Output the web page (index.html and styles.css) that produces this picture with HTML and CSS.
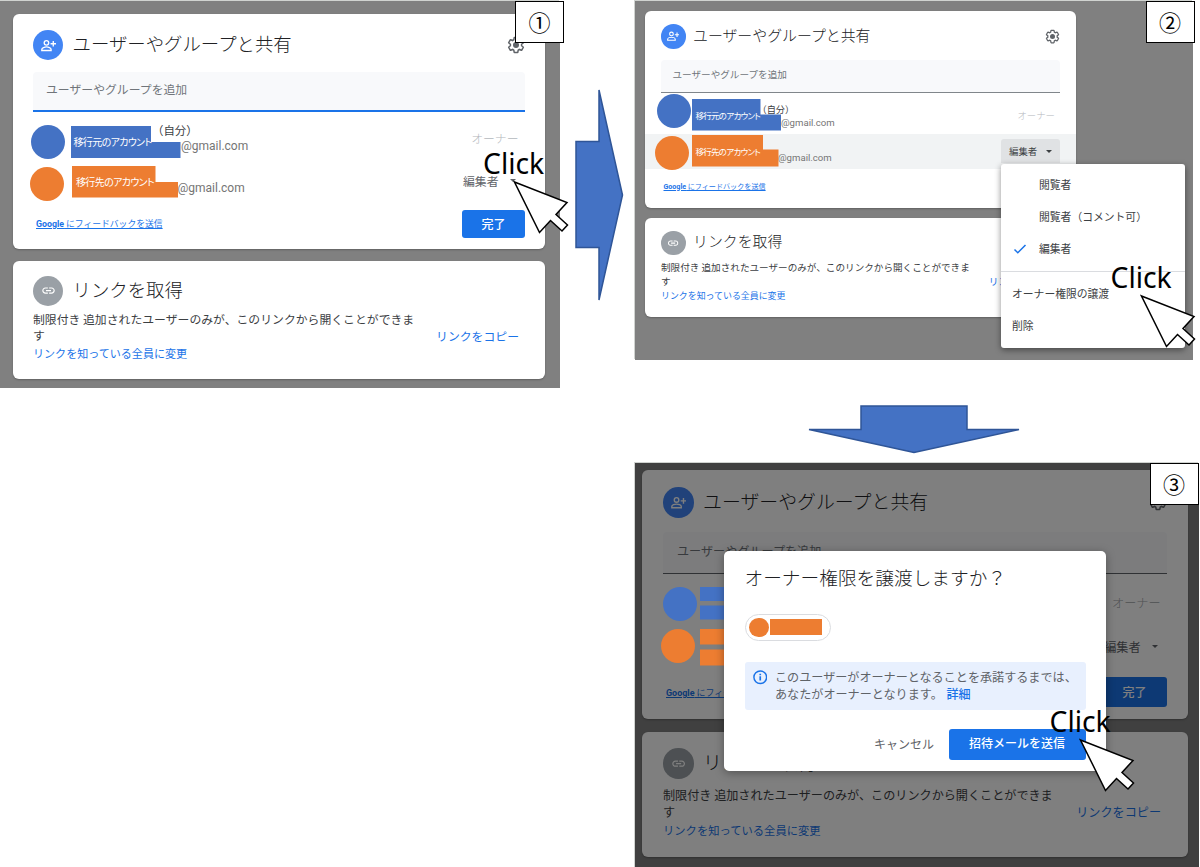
FILE: index.html
```html
<!DOCTYPE html>
<html lang="ja">
<head>
    <meta charset="UTF-8">
    <meta name="viewport" content="width=device-width, initial-scale=1.0">
    <title>オーナー権限の譲渡手順</title>
    <link rel="stylesheet" href="styles.css">
</head>
<body>
    <!-- 共通アイコン -->
    <svg class="defs" width="0" height="0">
        <symbol id="person-add" viewBox="0 0 22 17">
            <g fill="none" stroke="#fff" stroke-width="2">
                <circle cx="8" cy="4.6" r="3.3"/>
                <path d="M1.2 15.8v-1.6c0-2.3 4.4-3.6 6.8-3.6s6.8 1.3 6.8 3.6v1.6z"/>
                <path d="M18 2v8M14 6h8"/>
            </g>
        </symbol>
        <symbol id="link" viewBox="0 0 24 24">
            <path fill="#fff" d="M3.9 12c0-1.71 1.39-3.1 3.1-3.1h4V7H7c-2.76 0-5 2.24-5 5s2.24 5 5 5h4v-1.9H7c-1.71 0-3.1-1.39-3.1-3.1zM8 13h8v-2H8v2zm9-6h-4v1.9h4c1.71 0 3.1 1.39 3.1 3.1s-1.39 3.1-3.1 3.1h-4V17h4c2.76 0 5-2.24 5-5s-2.24-5-5-5z"/>
        </symbol>
        <symbol id="gear" viewBox="0 0 24 24">
            <path fill="none" stroke="#5f6368" stroke-width="2" d="M19.43 12.98c.04-.32.07-.64.07-.98 0-.34-.03-.66-.07-.98l2.11-1.65c.19-.15.24-.42.12-.64l-2-3.46c-.09-.16-.26-.25-.44-.25-.06 0-.12.01-.17.03l-2.49 1c-.52-.4-1.08-.73-1.69-.98l-.38-2.65C14.46 2.18 14.25 2 14 2h-4c-.25 0-.46.18-.49.42l-.38 2.65c-.61.25-1.17.59-1.69.98l-2.49-1c-.06-.02-.12-.03-.18-.03-.17 0-.34.09-.43.25l-2 3.46c-.13.22-.07.49.12.64l2.11 1.65c-.04.32-.07.65-.07.98 0 .33.03.66.07.98l-2.11 1.65c-.19.15-.24.42-.12.64l2 3.46c.09.16.26.25.44.25.06 0 .12-.01.17-.03l2.49-1c.52.4 1.08.73 1.69.98l.38 2.65c.03.24.24.42.49.42h4c.25 0 .46-.18.49-.42l.38-2.65c.61-.25 1.17-.59 1.69-.98l2.49 1c.06.02.12.03.18.03.17 0 .34-.09.43-.25l2-3.46c.12-.22.07-.49-.12-.64l-2.11-1.65z"/>
            <circle cx="12" cy="12" r="4" fill="#5f6368"/>
        </symbol>
        <symbol id="cursor" viewBox="0 0 56 54">
            <path fill="#fff" stroke="#000" stroke-width="1.5" d="M1.5 2 54 22.5 43 34.5 54.5 45 49 51 37.5 40.5 26.5 52.5z"/>
        </symbol>
    </svg>

    <div class="board">
        <!-- 手順1 -->
        <section class="shot shot1">
            <div class="card share">
                <div class="head">
                    <span class="icon blue"><svg><use href="#person-add"/></svg></span>
                    <h2>ユーザーやグループと共有</h2>
                    <svg class="gear"><use href="#gear"/></svg>
                </div>
                <div class="field">ユーザーやグループを追加</div>
                <div class="row">
                    <div class="who"><span class="me">（自分）</span><span class="mail">@gmail.com</span></div>
                    <span class="role owner">オーナー</span>
                    <i class="avatar src"></i>
                    <span class="mask src">移行元のアカウント</span>
                </div>
                <div class="row second">
                    <div class="who"><span class="me"></span><span class="mail">@gmail.com</span></div>
                    <span class="role editor">編集者<i class="caret"></i></span>
                    <i class="avatar dst"></i>
                    <span class="mask dst">移行先のアカウント</span>
                </div>
                <div class="foot">
                    <a class="feedback"><b>Google</b> にフィードバックを送信</a>
                    <span class="button">完了</span>
                </div>
            </div>
            <div class="card getlink">
                <div class="head">
                    <span class="icon gray"><svg><use href="#link"/></svg></span>
                    <h2>リンクを取得</h2>
                </div>
                <div class="link-body">
                    <div>
                        <p>制限付き 追加されたユーザーのみが、このリンクから開くことができま<br>す</p>
                        <a class="change">リンクを知っている全員に変更</a>
                    </div>
                    <a class="copy">リンクをコピー</a>
                </div>
            </div>
            <div class="badge">①</div>
            <div class="click">Click</div>
            <svg class="cursor"><use href="#cursor"/></svg>
        </section>

        <svg class="arrow-right" viewBox="0 0 50 214">
            <path fill="#4472c4" stroke="#2f5597" stroke-width="1.5" d="M1 54.5h23V3l23.5 105L24 213v-52.5H1z"/>
        </svg>

        <div class="right">
            <!-- 手順2 -->
            <section class="shot shot2">
                <div class="card share">
                    <div class="head">
                        <span class="icon blue"><svg><use href="#person-add"/></svg></span>
                        <h2>ユーザーやグループと共有</h2>
                        <svg class="gear"><use href="#gear"/></svg>
                    </div>
                    <div class="field">ユーザーやグループを追加</div>
                    <div class="row">
                        <div class="who"><span class="me">（自分）</span><span class="mail">@gmail.com</span></div>
                        <span class="role owner">オーナー</span>
                        <i class="avatar src"></i>
                        <span class="mask src">移行元のアカウント</span>
                    </div>
                    <div class="row second">
                        <div class="who"><span class="me"></span><span class="mail">@gmail.com</span></div>
                        <span class="role editor">編集者<i class="caret"></i></span>
                        <i class="avatar dst"></i>
                        <span class="mask dst">移行先のアカウント</span>
                    </div>
                    <div class="foot">
                        <a class="feedback"><b>Google</b> にフィードバックを送信</a>
                    </div>
                </div>
                <div class="card getlink">
                    <div class="head">
                        <span class="icon gray"><svg><use href="#link"/></svg></span>
                        <h2>リンクを取得</h2>
                    </div>
                    <div class="link-body">
                        <div>
                            <p>制限付き 追加されたユーザーのみが、このリンクから開くことができま<br>す</p>
                            <a class="change">リンクを知っている全員に変更</a>
                        </div>
                        <a class="copy">リンクをコピー</a>
                    </div>
                </div>
                <ul class="menu">
                    <li class="indent">閲覧者</li>
                    <li class="indent">閲覧者（コメント可）</li>
                    <li class="checked"><svg viewBox="0 0 14 12"><path fill="none" stroke="#1a73e8" stroke-width="1.5" d="M1.5 6.5 4.8 9.8 12.5 2"/></svg>編集者</li>
                    <li class="line"></li>
                    <li>オーナー権限の譲渡</li>
                    <li>削除</li>
                </ul>
                <div class="badge">②</div>
                <div class="click">Click</div>
                <svg class="cursor"><use href="#cursor"/></svg>
            </section>

            <svg class="arrow-down" viewBox="0 0 214 50">
                <path fill="#4472c4" stroke="#2f5597" stroke-width="1.5" d="M54 2h106v23.5h52L107 48.5 2 25.5h52z"/>
            </svg>

            <!-- 手順3 -->
            <section class="shot shot3">
                <div class="card share">
                    <div class="head">
                        <span class="icon blue"><svg><use href="#person-add"/></svg></span>
                        <h2>ユーザーやグループと共有</h2>
                        <svg class="gear"><use href="#gear"/></svg>
                    </div>
                    <div class="field">ユーザーやグループを追加</div>
                    <div class="row">
                        <span class="role owner">オーナー</span>
                    </div>
                    <div class="row second">
                        <span class="role editor">編集者<i class="caret"></i></span>
                    </div>
                    <div class="foot">
                        <a class="feedback"><b>Google</b> にフィードバックを送信</a>
                        <span class="button">完了</span>
                    </div>
                </div>
                <div class="card getlink">
                    <div class="head">
                        <span class="icon gray"><svg><use href="#link"/></svg></span>
                        <h2>リンクを取得</h2>
                    </div>
                    <div class="link-body">
                        <div>
                            <p>制限付き 追加されたユーザーのみが、このリンクから開くことができま<br>す</p>
                            <a class="change">リンクを知っている全員に変更</a>
                        </div>
                        <a class="copy">リンクをコピー</a>
                    </div>
                </div>
                <div class="overlay"></div>
                <i class="avatar src"></i>
                <i class="avatar dst"></i>
                <div class="bars src"></div>
                <div class="bars dst"></div>
                <div class="dialog">
                    <h3>オーナー権限を譲渡しますか？</h3>
                    <div class="chip"><i class="dot"></i><i class="name"></i></div>
                    <div class="info">
                        <svg viewBox="0 0 24 24"><circle cx="12" cy="12" r="10.5" fill="none" stroke="#1a73e8" stroke-width="2.4"/><path fill="#1a73e8" d="M10.6 10.5h2.8v7h-2.8zM10.6 6h2.8v2.8h-2.8z"/></svg>
                        <p>このユーザーがオーナーとなることを承諾するまでは、<br>あなたがオーナーとなります。 <a>詳細</a></p>
                    </div>
                    <div class="actions">
                        <span class="cancel">キャンセル</span>
                        <span class="send">招待メールを送信</span>
                    </div>
                </div>
                <div class="badge">③</div>
                <div class="click">Click</div>
                <svg class="cursor"><use href="#cursor"/></svg>
            </section>
        </div>
    </div>
</body>
</html>
```
FILE: styles.css
```css
* {
    box-sizing: border-box;
}
body {
    margin: 0;
    height: 867px;
    overflow: hidden;
    background-color: #fff;
    color: #3c4043;
    font-family: "Noto Sans CJK JP", sans-serif;
}
h2, h3, p, ul {
    margin: 0;
    padding: 0;
    font-weight: 300;
}
.defs {
    position: absolute;
}
.board {
    display: flex;
    align-items: flex-start;
    padding-top: 1px;
}
.right {
    flex: none;
    width: 565px;
}
.arrow-right {
    flex: none;
    width: 50px;
    height: 214px;
    margin: 86px 10px 0 15px;
}
.arrow-down {
    display: block;
    width: 214px;
    height: 50px;
    margin: 44px 0 9px 172px;
}

/* 画面ごとの寸法 */
.shot {
    position: relative;
    flex: none;
    background-color: #808080;
    box-shadow: -1px -1px 0 #d0d3d0;
}
.shot1 {
    --pad: 20px;
    --icon: 30px;
    --title: 18.4px;
    --body: 11.85px;
    --change: 11.05px;
    --small: 8.8px;
    --row: 42px;
    --line: 16.5px;
    --mail: 12px;
    width: 560px;
    height: 387px;
    padding: 13px 15px 0 13px;
}
.shot2 {
    --pad: 16px;
    --icon: 24.5px;
    --title: 14.9px;
    --body: 9.6px;
    --change: 8.93px;
    --small: 7.1px;
    --row: 35px;
    --line: 14px;
    --mail: 9.6px;
    width: 558px;
    height: 359px;
    padding: 10px 117px 0 10px;
}
.shot3 {
    --pad: 21px;
    --icon: 30.5px;
    --title: 18.9px;
    --body: 12.12px;
    --change: 11.3px;
    --small: 8.95px;
    --row: 44px;
    --line: 17px;
    width: 563.5px;
    height: 405px;
    padding: 7px 10.5px 0 7px;
}

/* カード */
.card {
    background-color: #fff;
    border-radius: 6px;
    box-shadow: 0 1px 2px rgba(0, 0, 0, 0.25);
}
.shot1 .share { height: 234.5px; padding-top: 16px; }
.shot1 .getlink { height: 117.5px; margin-top: 12.5px; padding-top: 14.5px; }
.shot2 .share { height: 197px; padding-top: 13px; }
.shot2 .getlink { height: 99.5px; margin-top: 9.5px; padding-top: 13px; }
.shot3 .share { height: 249px; padding-top: 17px; }
.shot3 .getlink { height: 125px; margin-top: 12.5px; padding-top: 16.5px; }
.head {
    display: flex;
    align-items: center;
    height: var(--icon);
    padding: 0 var(--pad);
}
.head h2 {
    flex: 1;
    margin-left: 9.5px;
    padding-bottom: 4px;
    color: #202124;
    font-size: var(--title);
    line-height: calc(var(--icon) - 2px);
    white-space: nowrap;
}
.shot2 .head h2 { margin-left: 7.5px; padding-bottom: 3px; }
.shot3 .head h2 { padding-bottom: 3px; }
.icon {
    display: flex;
    align-items: center;
    justify-content: center;
    width: var(--icon);
    height: var(--icon);
    border-radius: 50%;
}
.icon.blue { background-color: #4285f4; }
.icon.gray { background-color: #9aa0a6; }
.icon svg {
    width: 50%;
    height: 50%;
}
.gear {
    width: 18px;
    height: 18px;
}
.shot2 .gear { width: 15px; height: 15px; }
.field {
    margin: 12px var(--pad) 0;
    height: 40px;
    padding-left: 13px;
    background-color: #f8f9fb;
    border-bottom: 2px solid #1a73e8;
    border-radius: 4px 4px 0 0;
    color: #70757a;
    font-size: var(--body);
    line-height: 34px;
}
.shot2 .field {
    margin-top: 11.5px;
    height: 32.5px;
    padding-left: 11.5px;
    border-bottom: 1px solid #80868b;
    line-height: 28px;
}
.shot3 .field {
    margin-top: 14px;
    height: 42px;
    padding-left: 14px;
    border-bottom: 1px solid #5f6368;
    line-height: 37px;
}
.row {
    position: relative;
    display: flex;
    align-items: center;
    justify-content: flex-end;
    height: var(--row);
    padding-right: var(--pad);
}
.field + .row { margin-top: 5px; }
.shot2 .field + .row { margin-top: 6px; }
.shot3 .field + .row { margin-top: 7px; }
.shot2 .second { background-color: #f1f3f4; }
.who {
    flex: 1;
    display: flex;
    flex-direction: column;
    font-size: calc(var(--body) - 0.4px);
}
.who span {
    height: var(--line);
    line-height: var(--line);
}
.mail {
    color: #757575;
    font-family: Roboto, sans-serif;
    font-size: var(--mail);
}
.shot1 .me { margin-left: 139px; }
.shot1 .mail { margin-left: 168px; }
.shot1 .second .mail { margin-left: 164.5px; }
.shot2 .me { margin-left: 112.5px; }
.shot2 .mail { margin-left: 136px; }
.shot2 .second .mail { margin-left: 133px; }
.role {
    display: flex;
    align-items: center;
    font-size: var(--body);
}
.owner {
    color: #b4b8bd;
    font-weight: 300;
    margin-right: 6.5px;
}
.shot1 .owner { padding-bottom: 1px; }
.shot2 .owner { font-size: 9.4px; margin-right: 5px; padding-bottom: 2px; }
.shot3 .owner { color: #a0a4a8; }
.editor { color: #5f6368; margin-right: 9.5px; }
.shot2 .editor {
    height: 24px;
    width: 59px;
    margin-right: 0;
    padding-left: 8px;
    background-color: #e0e2e4;
    border-radius: 3px 3px 0 0;
    color: #3c4043;
    font-size: 9.4px;
}
.caret {
    margin-left: 11px;
    border: 3.5px solid transparent;
    border-top-color: #5f6368;
    border-bottom: 0;
}
.shot2 .caret { margin-left: 9px; border-width: 3px 3px 0; border-top-color: #3c4043; }
.foot {
    display: flex;
    align-items: center;
    justify-content: space-between;
    height: 28px;
    margin-top: 8.5px;
    padding: 0 var(--pad) 0 calc(var(--pad) + 3px);
}
.shot2 .foot { height: 22px; margin-top: 6px; padding-left: 18.5px; }
.shot3 .foot { height: 30px; margin-top: 8.5px; }
.feedback {
    color: #1a73e8;
    font-size: var(--small);
    text-decoration: underline;
    white-space: nowrap;
}
.feedback b {
    font-family: Roboto, sans-serif;
    font-weight: 700;
}
.button {
    width: 63px;
    height: 28px;
    background-color: #1a73e8;
    border-radius: 3px;
    color: #fff;
    font-size: 12px;
    font-weight: 500;
    line-height: 27px;
    text-align: center;
}
.shot3 .button { width: 65px; height: 30px; line-height: 29px; }

.link-body {
    display: flex;
    align-items: center;
    justify-content: space-between;
    padding: 5.5px calc(var(--pad) + 6px) 0 var(--pad);
}
.shot2 .link-body { padding-top: 5px; padding-right: 20px; }
.shot3 .link-body { padding-top: 7px; }
.link-body p {
    font-size: var(--body);
    font-weight: 400;
    line-height: 16.3px;
    white-space: nowrap;
}
.link-body a {
    display: block;
    color: #1a73e8;
    line-height: 18px;
    white-space: nowrap;
}
.change { font-size: var(--change); }
.copy { font-size: var(--body); }
.shot2 .link-body p { line-height: 14px; }
.shot2 .link-body a { line-height: 15px; }
.shot3 .link-body p { line-height: 17px; }
.shot3 .change { padding-top: 1px; }

/* アカウントを隠す図形 */
.avatar {
    position: absolute;
    width: 34px;
    height: 34px;
    border-radius: 50%;
}
.src { background-color: #4472c4; }
.dst { background-color: #ed7d31; }
.mask {
    position: absolute;
    color: #fff;
    font-feature-settings: "palt";
    white-space: nowrap;
}
.shot1 .avatar.src { left: 18px; top: 7.5px; }
.shot1 .avatar.dst { left: 16.5px; top: 7.5px; }
.shot1 .mask {
    font-size: 10px;
    letter-spacing: -0.65px;
    line-height: 32px;
}
.shot1 .mask.src {
    left: 58px;
    top: 9px;
    width: 109.5px;
    height: 32px;
    padding-left: 2.5px;
    clip-path: polygon(0 0, 80px 0, 80px 16px, 100% 16px, 100% 100%, 0 100%);
}
.shot1 .mask.dst {
    left: 59px;
    top: 6.5px;
    width: 106px;
    height: 32px;
    padding-left: 4px;
    clip-path: polygon(0 0, 83.5px 0, 83.5px 16.5px, 100% 16.5px, 100% 100%, 0 100%);
}
.shot2 .avatar.src { left: 11.5px; top: -5px; }
.shot2 .avatar.dst { left: 10px; top: 2px; }
.shot2 .mask {
    left: 46.5px;
    height: 32px;
    padding-left: 4px;
    font-size: 8.5px;
    letter-spacing: -0.75px;
    line-height: 32px;
}
.shot2 .mask.src {
    top: 0;
    width: 89.5px;
    clip-path: polygon(0 0, 69px 0, 69px 16px, 100% 16px, 100% 100%, 0 100%);
}
.shot2 .mask.dst {
    top: 1px;
    width: 87px;
    clip-path: polygon(0 0, 71.5px 0, 71.5px 15px, 100% 15px, 100% 100%, 0 100%);
}
.shot3 .avatar.src { left: 28px; top: 124px; }
.shot3 .avatar.dst { left: 26px; top: 166px; }
.bars {
    position: absolute;
    left: 65px;
    width: 60px;
}
.bars.src {
    top: 124px;
    height: 32.5px;
    clip-path: polygon(0 0, 100% 0, 100% 14px, 0 14px, 0 18.5px, 100% 18.5px, 100% 100%, 0 100%);
}
.bars.dst {
    top: 165.5px;
    height: 37px;
    clip-path: polygon(0 0, 100% 0, 100% 16px, 0 16px, 0 21px, 100% 21px, 100% 100%, 0 100%);
}

/* メニュー */
.menu {
    position: absolute;
    left: 366px;
    top: 162.5px;
    width: 184px;
    height: 184.5px;
    padding-top: 4px;
    background-color: #fff;
    border-radius: 3px;
    box-shadow: 0 2px 6px rgba(0, 0, 0, 0.45);
    list-style: none;
    font-size: 10.8px;
    font-weight: 400;
    color: #3c4043;
}
.menu li {
    display: flex;
    align-items: center;
    height: 32.4px;
    padding-left: 11px;
}
.menu .indent { padding-left: 38px; }
.menu .checked svg {
    width: 14px;
    height: 12px;
    margin: 2px 12px 0 1px;
}
.menu .line {
    height: 1px;
    margin: 6px 0 5px;
    background-color: #dadce0;
}

/* ダイアログ */
.overlay {
    position: absolute;
    inset: 0;
    background-color: rgba(0, 0, 0, 0.5);
}
.dialog {
    position: absolute;
    left: 89px;
    top: 88px;
    width: 382px;
    height: 220px;
    padding: 11px 20.5px 0;
    background-color: #fff;
    border-radius: 5px;
    box-shadow: 0 2px 10px rgba(0, 0, 0, 0.35);
}
.dialog h3 {
    color: #202124;
    font-size: 18.7px;
    line-height: 29px;
    white-space: nowrap;
}
.chip {
    display: flex;
    align-items: center;
    width: 86px;
    height: 27px;
    margin-top: 23px;
    padding-left: 3.5px;
    border: 1px solid #dadce0;
    border-radius: 14px;
}
.dot {
    width: 19.5px;
    height: 19.5px;
    border-radius: 50%;
    background-color: #ed7d31;
}
.name {
    width: 52px;
    height: 16px;
    margin: -1px 0 0 1.5px;
    background-color: #ed7d31;
}
.info {
    display: flex;
    height: 48px;
    margin-top: 21px;
    padding: 6px 0 0 8px;
    background-color: #e8f0fe;
    border-radius: 3px;
    font-size: 12.1px;
    line-height: 17px;
    white-space: nowrap;
}
.info svg {
    flex: none;
    width: 14.5px;
    height: 14.5px;
    margin: 2px 8px 0 0;
}
.info p { font-weight: 400; color: #5f6368; }
.info a { color: #1a73e8; font-weight: 500; margin-left: 1px; }
.actions {
    display: flex;
    align-items: center;
    justify-content: flex-end;
    margin-top: 19px;
    font-size: 12px;
}
.cancel { color: #5f6368; margin-right: 14.5px; padding-bottom: 2px; }
.send {
    width: 137px;
    height: 30.5px;
    background-color: #1a73e8;
    border-radius: 3px;
    color: #fff;
    font-weight: 500;
    line-height: 28px;
    text-align: center;
}

/* 番号とクリック位置 */
.badge {
    position: absolute;
    top: 0;
    width: 49px;
    height: 42px;
    background-color: #fff;
    border: 1.5px solid #000;
    color: #000;
    font-size: 22px;
    line-height: 38px;
    text-align: center;
}
.shot1 .badge { left: 515px; }
.shot2 .badge { left: 510.5px; }
.shot3 .badge { left: 514.5px; }
.click {
    position: absolute;
    color: #000;
    font-family: "Noto Sans", sans-serif;
    font-size: 28.3px;
    line-height: 38px;
}
.cursor {
    position: absolute;
    width: 56px;
    height: 54px;
}
.shot1 .click { left: 483px; top: 143px; }
.shot1 .cursor { left: 513px; top: 179px; }
.shot2 .click { left: 475.5px; top: 257px; }
.shot2 .cursor { left: 505px; top: 292.5px; }
.shot3 .click { left: 414.5px; top: 239px; }
.shot3 .cursor { left: 444px; top: 275px; }
```
